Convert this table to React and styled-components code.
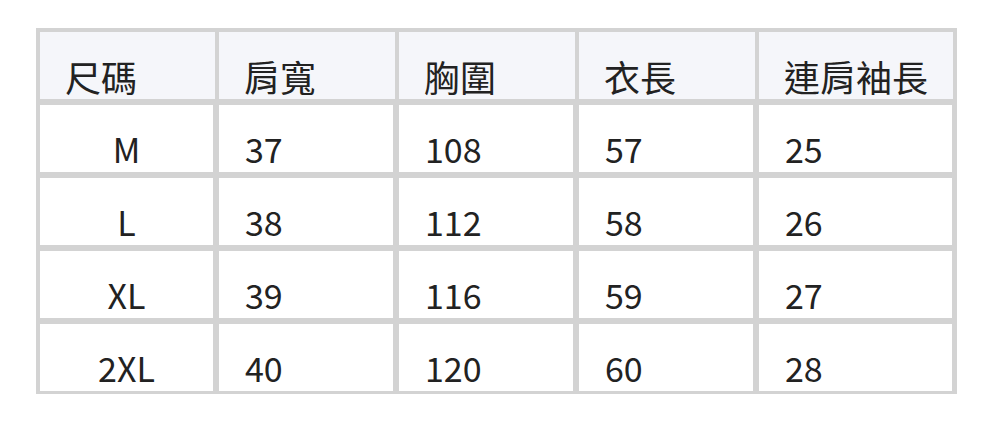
import styled, { createGlobalStyle } from 'styled-components';

const GlobalStyle = createGlobalStyle`
    body {
        margin: 0;
        background: #ffffff;
        font-family: "Noto Sans CJK TC", "Noto Sans", sans-serif;
        color: #222222;
    }
`;

const Page = styled.div`
    padding: 28px 0 0 36px;
`;

const SizeTable = styled.div`
    display: inline-grid;
    grid-template-columns: 175px 176px 176px 176px 194px;
    column-gap: 4px;
    row-gap: 6px;
    padding: 4px 4px 3px 4px;
    background-color: #d3d3d3;
`;

const HeadCell = styled.div`
    height: 67px;
    box-sizing: border-box;
    padding: 26px 0 0 25px;
    background-color: #f5f6fa;
    font-size: 36px;
    line-height: 1;
    white-space: nowrap;
`;

const Cell = styled.div`
    height: 67px;
    box-sizing: border-box;
    padding: 27px ${(props) => (props.$center ? '0' : '0 0 26px')};
    margin-right: ${(props) => (props.$last ? '1px' : '2px')};
    background-color: #ffffff;
    font-size: 34px;
    line-height: 1;
    text-align: ${(props) => (props.$center ? 'center' : 'left')};
`;

const headers = ['尺碼', '肩寬', '胸圍', '衣長', '連肩袖長'];

const rows = [
    ['M', '37', '108', '57', '25'],
    ['L', '38', '112', '58', '26'],
    ['XL', '39', '116', '59', '27'],
    ['2XL', '40', '120', '60', '28'],
];

export default function App() {
    return (
        <Page>
            <GlobalStyle />
            <SizeTable role="table">
                {headers.map((h) => (
                    <HeadCell key={h} role="columnheader">
                        {h}
                    </HeadCell>
                ))}
                {rows.map((row) =>
                    row.map((value, i) => (
                        <Cell
                            key={row[0] + i}
                            role="cell"
                            $center={i === 0}
                            $last={i === row.length - 1}
                        >
                            {value}
                        </Cell>
                    ))
                )}
            </SizeTable>
        </Page>
    );
}
